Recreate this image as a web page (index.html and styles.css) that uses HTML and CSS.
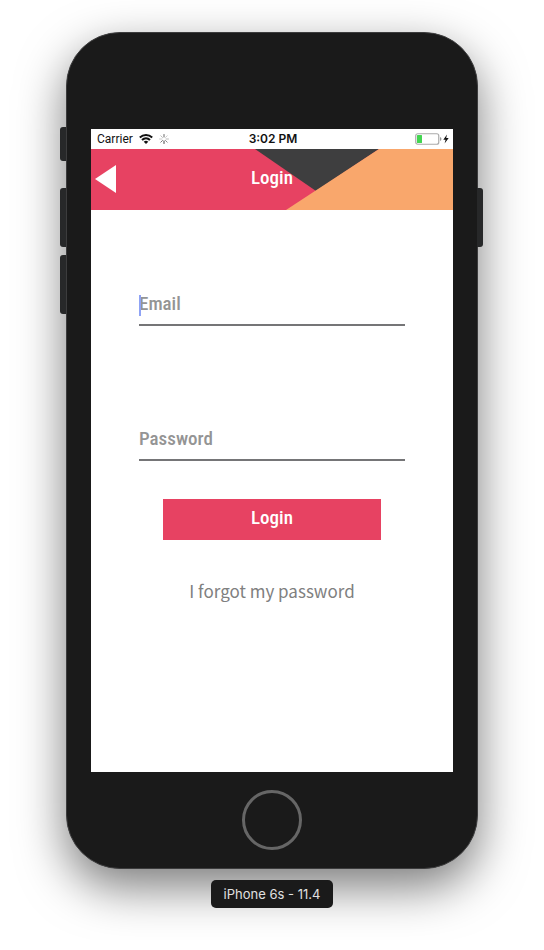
FILE: index.html
```html
<!DOCTYPE html>
<html lang="en">
<head>
<meta charset="utf-8">
<meta name="viewport" content="width=device-width, initial-scale=1">
<title>Login</title>
<link rel="stylesheet" href="styles.css">
</head>
<body>
<div class="phone">
  <span class="key key-mute"></span>
  <span class="key key-up"></span>
  <span class="key key-down"></span>
  <span class="key key-power"></span>
  <main class="screen">
    <div class="status">
      <div class="status-left">
        <span>Carrier</span>
        <svg class="wifi" viewBox="0 0 14 10" aria-hidden="true">
          <path d="M.8 3.600C4.400.2 9.600.2 13.200 3.600M3 6C5.300 3.800 8.700 3.800 11 6" fill="none" stroke="#111" stroke-width="2"/>
          <path d="M4.700 7.700Q7 5.800 9.300 7.700L7 10Z" fill="#111"/>
        </svg>
        <svg class="spinner" viewBox="0 0 10 10" aria-hidden="true">
          <g stroke-width="1" stroke-linecap="round">
            <path d="M5 .5V3" stroke="#666"/>
            <path d="M8.200 1.800L6.500 3.500" stroke="#ccc"/>
            <path d="M9.500 5H7" stroke="#bbb"/>
            <path d="M8.200 8.200L6.500 6.500" stroke="#888"/>
            <path d="M5 9.500V7" stroke="#444"/>
            <path d="M1.800 8.200L3.500 6.500" stroke="#777"/>
            <path d="M.5 5H3" stroke="#ccc"/>
            <path d="M1.800 1.800L3.500 3.500" stroke="#bbb"/>
          </g>
        </svg>
      </div>
      <span class="time">3:02 PM</span>
      <div class="status-right">
        <svg class="battery" viewBox="0 0 27 12" aria-hidden="true">
          <rect x=".75" y=".75" width="23" height="10.500" rx="2" fill="#fff" stroke="#aaa" stroke-width="1.200"/>
          <rect x="2" y="2" width="5" height="8" rx=".5" fill="#43d551"/>
          <path d="M25 4Q26.500 4.500 26.500 6T25 8Z" fill="#999"/>
        </svg>
        <svg class="bolt" viewBox="0 0 6 10" aria-hidden="true"><path d="M4 .5L.3 5.700H2.600L1.600 9.500L5.700 4.100H3.200Z" fill="#111"/></svg>
      </div>
    </div>
    <header class="header">
      <svg class="shapes" viewBox="0 0 362 61" preserveAspectRatio="none" aria-hidden="true">
        <path d="M164 0H288L225 42Z" fill="#3e3e3f"/>
        <path d="M288 0H362V61H195Z" fill="#f9a76c"/>
      </svg>
      <button class="back" type="button" aria-label="Back">
        <svg viewBox="0 0 21 28" aria-hidden="true"><path d="M0 14L21 0V28Z" fill="#fff"/></svg>
      </button>
      <h1 class="title">Login</h1>
    </header>
    <form class="form">
      <div class="field">
        <input id="email" type="email" placeholder=" ">
        <label for="email">Email</label>
        <span class="caret"></span>
      </div>
      <div class="field">
        <input id="password" type="password" placeholder=" ">
        <label for="password">Password</label>
      </div>
      <button class="submit" type="submit">Login</button>
      <a class="forgot" href="#">I forgot my password</a>
    </form>
  </main>
  <button class="home" type="button" aria-label="Home"></button>
</div>
<p class="device">iPhone 6s - 11.4</p>
</body>
</html>
```
FILE: styles.css
```css
* {
  box-sizing: border-box;
}

body {
  margin: 0;
  padding: 32px 24px;
  background: #fff;
  font-family: Inter, "Liberation Sans", sans-serif;
}

.phone {
  position: relative;
  display: flex;
  flex-direction: column;
  align-items: center;
  max-width: 412px;
  margin: 0 auto;
  padding: 96px 24px 18px;
  border: 1px solid #3c3c3d;
  border-radius: 54px;
  background: #1a1a1a;
  box-shadow: 0 18px 48px rgba(0, 0, 0, .52);
}

.key {
  position: absolute;
  left: -7px;
  width: 6px;
  height: 59px;
  border-radius: 3px 0 0 3px;
  background: #272829;
}

.key-mute {
  top: 94px;
  height: 34px;
}

.key-up {
  top: 155px;
}

.key-down {
  top: 222px;
}

.key-power {
  top: 155px;
  right: -6px;
  left: auto;
  border-radius: 0 3px 3px 0;
}

.screen {
  width: 100%;
  min-height: 643px;
  background: #fff;
}

.status {
  display: grid;
  grid-template-columns: 1fr auto 1fr;
  align-items: center;
  height: 20px;
  padding: 0 4px 0 6px;
  color: #111;
  font-family: Roboto, "Liberation Sans", sans-serif;
  font-size: 12px;
  line-height: 20px;
}

.status-left,
.status-right {
  display: flex;
  align-items: center;
}

.status-left {
  gap: 6px;
}

.status-right {
  justify-content: flex-end;
  gap: 1px;
}

.time {
  font-family: Inter, "Liberation Sans", sans-serif;
  font-weight: 600;
}

.wifi {
  width: 14px;
  height: 10px;
}

.spinner {
  width: 10px;
  height: 10px;
}

.battery {
  width: 27px;
  height: 12px;
}

.bolt {
  width: 6px;
  height: 10px;
}

.header {
  position: relative;
  display: grid;
  grid-template-columns: 1fr auto 1fr;
  align-items: center;
  height: 61px;
  padding: 0 4px;
  background: #e74262;
}

.shapes {
  position: absolute;
  inset: 0;
  width: 100%;
  height: 100%;
}

.back {
  position: relative;
  justify-self: start;
  padding: 0 0 2px;
  border: 0;
  background: none;
}

.back svg {
  display: block;
  width: 21px;
  height: 28px;
}

.title,
.field input,
.field label,
.submit {
  font-family: "Roboto Condensed", "DejaVu Sans Condensed", sans-serif;
  font-size: 19px;
  font-weight: 500;
  line-height: 24px;
}

.title {
  position: relative;
  margin: 0;
  padding-bottom: 4px;
  color: #fff;
}

.form {
  display: flex;
  flex-direction: column;
  align-items: center;
  padding: 74px 48px 0;
}

.field {
  position: relative;
  width: 100%;
}

.field + .field {
  margin-top: 93px;
}

.field input {
  display: block;
  width: 100%;
  height: 42px;
  padding: 0 0 2px;
  border: 0;
  border-bottom: 2px solid #757577;
  border-radius: 0;
  outline: 0;
  background: none;
  color: #444;
}

.field label {
  position: absolute;
  top: 8px;
  left: 0;
  color: #949494;
}

.field input:not(:placeholder-shown) ~ label {
  display: none;
}

.caret {
  position: absolute;
  top: 11px;
  left: 0;
  width: 2px;
  height: 21px;
  background: #8fa3f5;
}

.submit {
  width: 82%;
  height: 41px;
  margin-top: 38px;
  padding: 0 0 4px;
  border: 0;
  background: #e74262;
  color: #fff;
}

.forgot {
  margin-top: 37px;
  color: #808080;
  font-family: "Noto Sans CJK SC", "Noto Sans", sans-serif;
  font-size: 17px;
  line-height: 28px;
  text-decoration: none;
}

.home {
  width: 60px;
  height: 60px;
  margin-top: 18px;
  padding: 0;
  border: 3px solid #666;
  border-radius: 50%;
  background: none;
}

.device {
  position: relative;
  width: fit-content;
  margin: 11px auto 0;
  padding: 0 13px;
  border-radius: 5px;
  background: #1a1a1a;
  color: #e0e0e0;
  font-size: 13px;
  line-height: 28px;
}
```
